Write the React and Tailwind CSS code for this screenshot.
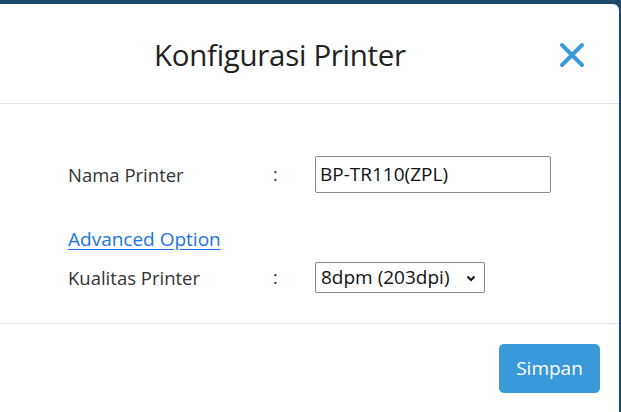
export default function App() {
  return (
    <div className="w-[621px] h-[412px] overflow-hidden bg-[#1d4a6b]" style={{ fontFamily: '"Open Sans", "Noto Sans", sans-serif' }}>
      <div className="mt-[4px] w-[619px] h-[420px] bg-white rounded-tr-[6px] flex flex-col">
        <div className="h-[100px] border-b border-[#e3e3e3] flex items-center relative">
          <div className="pl-[154px] text-[29.5px] text-[#222] tracking-[-0.3px] leading-none pt-[2px]">Konfigurasi Printer</div>
          <svg className="absolute left-[559px] top-[38px]" width="26" height="26" viewBox="0 0 26 26">
            <path d="M3 3 L23 23 M23 3 L3 23" stroke="#3a9ad9" strokeWidth="4" strokeLinecap="round" />
          </svg>
        </div>
        <div className="h-[220px] border-b border-[#e3e3e3] pl-[68px] pt-[52px] text-[#333]">
          <div className="flex items-center h-[37px]">
            <div className="w-[205px] text-[18.5px]">Nama Printer</div>
            <div className="w-[42px] text-[18px]">:</div>
            <div className="w-[236px] h-[37px] border border-[#8a8a8a] rounded-[2px] flex items-center pl-[4px] text-[19px] text-[#111]">BP-TR110(ZPL)</div>
          </div>
          <div className="mt-[34px] text-[19px] text-[#1a73e8] underline underline-offset-[3px] leading-[24px]">Advanced Option</div>
          <div className="flex items-center h-[31px] mt-[11px]">
            <div className="w-[205px] text-[18.5px]">Kualitas Printer</div>
            <div className="w-[42px] text-[18px]">:</div>
            <div className="w-[170px] h-[31px] border border-[#8a8a8a] rounded-[2px] flex items-center pl-[5px] text-[19px] text-[#111] relative">
              8dpm (203dpi)
              <svg className="absolute right-[8px] top-[12px]" width="10" height="7" viewBox="0 0 10 7">
                <path d="M1.5 1.5 L5 5 L8.5 1.5" stroke="#111" strokeWidth="2" fill="none" />
              </svg>
            </div>
          </div>
        </div>
        <div className="flex justify-end pr-[19px] pt-[20px]">
          <div className="w-[101px] h-[49px] bg-[#3a9ad9] rounded-[5px] text-white text-[19px] flex items-center justify-center">Simpan</div>
        </div>
      </div>
    </div>
  );
}
